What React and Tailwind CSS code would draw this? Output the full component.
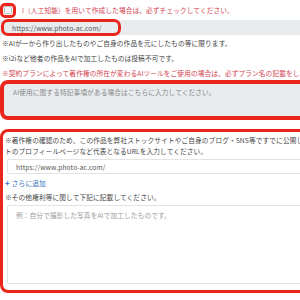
import { useState } from 'react'

const font = { fontFamily: '"Noto Sans CJK JP", "Noto Sans", sans-serif' }

export default function App() {
  const [checked, setChecked] = useState(false)

  return (
    <div className="w-[300px] h-[300px] overflow-hidden bg-white" style={font}>
      <div className="w-[420px] text-[6.7px] leading-[10px] tracking-[0.1px] text-[#444]">
        {/* AI checkbox */}
        <div className="relative h-[20px] flex items-center">
          <div className="absolute left-0 top-[3px] w-[16px] h-[15px] rounded-[5px] border-[3px] border-[#e8261c]" />
          <input
            type="checkbox"
            checked={checked}
            onChange={() => setChecked(!checked)}
            className="ml-[4px] w-[8px] h-[8px] appearance-none border border-[#bbb] rounded-[2px] bg-white"
          />
          <span className="ml-[10px] text-[#d3424f] whitespace-nowrap">
            I（人工知能）を用いて作成した場合は、必ずチェックしてください。
          </span>
        </div>

        {/* tool url (readonly) */}
        <div className="relative h-[15px] bg-[#e9ecef] flex items-center pl-[12px] text-[#555]">
          https://www.photo-ac.com/
          <div className="absolute left-[1px] top-[-1px] w-[120px] h-[17px] rounded-[7px] border-[3px] border-[#e8261c]" />
        </div>

        <div className="pl-[2px] whitespace-nowrap">
          <p className="h-[15px] flex items-center">※AIが一から作り出したものやご自身の作品を元にしたもの等に限ります。</p>
          <p className="h-[15px] flex items-center">※i2iなど他者の作品をAIで加工したものは投稿不可です。</p>
          <p className="h-[15px] flex items-center text-[#d3424f]">
            ※契約プランによって著作権の所在が変わるAIツールをご使用の場合は、必ずプラン名の記載をしてください。
          </p>
        </div>

        {/* AI notes */}
        <div className="h-[40px] rounded-[8px] border-[4px] border-[#e8261c] bg-[#e9ecef] px-[9px] pt-[3px] text-[#888]">
          AI使用に関する特記事項がある場合はこちらに入力してください。
        </div>

        {/* copyright section */}
        <div className="mt-[9px] h-[164px] rounded-[8px] border-[3px] border-[#e8261c] pl-[2px] pt-[3px]">
          <p className="whitespace-nowrap leading-[11px]">
            ※著作権の確認のため、この作品を弊社ストックサイトやご自身のブログ・SNS等ですでに公開している場合は、そのサイ
          </p>
          <p className="whitespace-nowrap leading-[11px]">
            トのプロフィールページなど代表となるURLを入力してください。
          </p>
          <div className="mt-[2px] ml-[2px] h-[15px] border border-[#e3e3e3] rounded-[2px] flex items-center pl-[8px] text-[#555]">
            https://www.photo-ac.com/
          </div>
          <div className="mt-[2px] h-[14px] flex items-center text-[#2f6fb8]">
            <span className="font-bold text-[8px] mr-[2px]">+</span>さらに追加
          </div>
          <p className="h-[14px] flex items-center">※その他権利等に関して下記に記載してください。</p>
          <div className="mt-[1px] ml-[2px] h-[79px] border border-[#e3e3e3] rounded-[2px] pl-[8px] pt-[4px] text-[#999]">
            例：自分で撮影した写真をAIで加工したものです。
          </div>
        </div>
      </div>
    </div>
  )
}
